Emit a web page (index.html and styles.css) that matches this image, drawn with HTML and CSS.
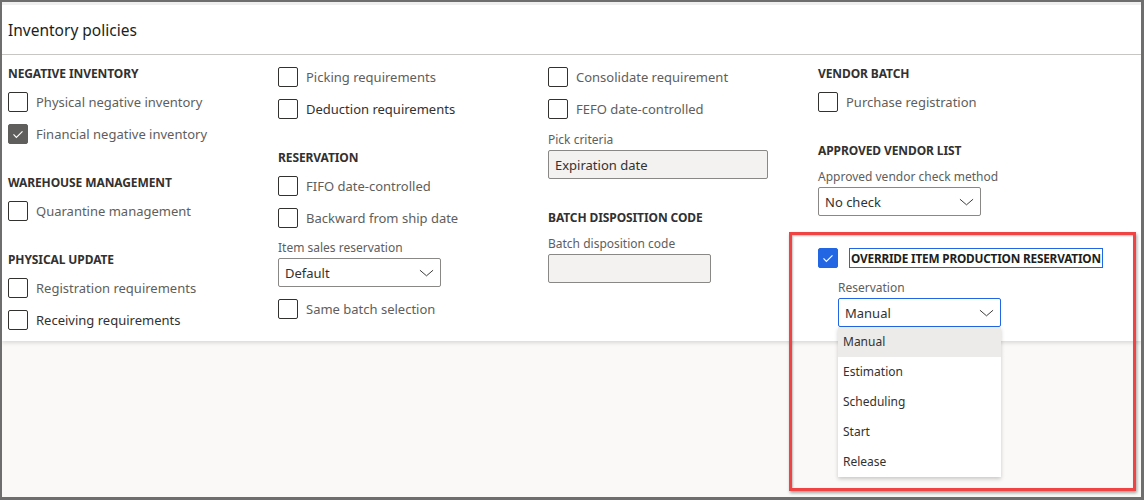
FILE: index.html
```html
<!DOCTYPE html>
<html lang="en">
<head>
    <meta charset="UTF-8">
    <title>Inventory policies</title>
    <link rel="stylesheet" href="styles.css">
</head>
<body>
<div class="frame">
    <div class="panel">
        <div class="panelHead">Inventory policies</div>
        <div class="panelBody">
            <div class="col">
                <div class="group">
                    <div class="groupTitle">Negative inventory</div>
                    <label class="check"><span class="box"></span><span class="text">Physical negative inventory</span></label>
                    <label class="check"><span class="box checked"><svg viewBox="0 0 20 20"><path d="M5 10.5l3.2 3.2L15 7"/></svg></span><span class="text">Financial negative inventory</span></label>
                </div>
                <div class="group">
                    <div class="groupTitle">Warehouse management</div>
                    <label class="check"><span class="box"></span><span class="text">Quarantine management</span></label>
                </div>
                <div class="group">
                    <div class="groupTitle">Physical update</div>
                    <label class="check"><span class="box"></span><span class="text">Registration requirements</span></label>
                    <label class="check"><span class="box"></span><span class="text dark">Receiving requirements</span></label>
                </div>
            </div>

            <div class="col">
                <div class="group">
                    <label class="check"><span class="box"></span><span class="text">Picking requirements</span></label>
                    <label class="check"><span class="box"></span><span class="text dark">Deduction requirements</span></label>
                </div>
                <div class="group">
                    <div class="groupTitle">Reservation</div>
                    <label class="check"><span class="box"></span><span class="text">FIFO date-controlled</span></label>
                    <label class="check"><span class="box"></span><span class="text">Backward from ship date</span></label>
                    <div class="field">
                        <div class="fieldLabel">Item sales reservation</div>
                        <div class="select">Default<svg class="chevron" viewBox="0 0 16 8"><path d="M1 1l7 6 7-6"/></svg></div>
                    </div>
                    <label class="check"><span class="box"></span><span class="text">Same batch selection</span></label>
                </div>
            </div>

            <div class="col">
                <div class="group">
                    <label class="check"><span class="box"></span><span class="text">Consolidate requirement</span></label>
                    <label class="check"><span class="box"></span><span class="text">FEFO date-controlled</span></label>
                    <div class="field first">
                        <div class="fieldLabel">Pick criteria</div>
                        <div class="input wide">Expiration date</div>
                    </div>
                </div>
                <div class="group">
                    <div class="groupTitle">Batch disposition code</div>
                    <div class="field">
                        <div class="fieldLabel">Batch disposition code</div>
                        <div class="input"></div>
                    </div>
                </div>
            </div>

            <div class="col">
                <div class="group">
                    <div class="groupTitle">Vendor batch</div>
                    <label class="check"><span class="box"></span><span class="text">Purchase registration</span></label>
                </div>
                <div class="group">
                    <div class="groupTitle">Approved vendor list</div>
                    <div class="field">
                        <div class="fieldLabel">Approved vendor check method</div>
                        <div class="select">No check<svg class="chevron" viewBox="0 0 16 8"><path d="M1 1l7 6 7-6"/></svg></div>
                    </div>
                </div>
                <div class="group">
                    <label class="check override"><span class="box blue"><svg viewBox="0 0 20 20"><path d="M5 10.5l3.2 3.2L15 7"/></svg></span><span class="overrideText">Override item production reservation</span></label>
                    <div class="field nested">
                        <div class="fieldLabel">Reservation</div>
                        <div class="dropWrap">
                            <div class="select focused">Manual<svg class="chevron" viewBox="0 0 16 8"><path d="M1 1l7 6 7-6"/></svg></div>
                            <ul class="dropList">
                                <li class="selected">Manual</li>
                                <li>Estimation</li>
                                <li>Scheduling</li>
                                <li>Start</li>
                                <li>Release</li>
                            </ul>
                        </div>
                    </div>
                </div>
            </div>
        </div>
    </div>
    <div class="callout"></div>
</div>
</body>
</html>
```

FILE: styles.css
```css
* {
    box-sizing: border-box;
}

body {
    margin: 0;
    font-family: "Segoe UI", "Noto Sans", sans-serif;
    color: #323130;
}

.frame {
    position: relative;
    width: 1144px;
    height: 500px;
    border-style: solid;
    border-color: #6e6e6e;
    border-width: 2px 3px 3px 2px;
    background-color: #faf9f8; /* page background */
    overflow: hidden;
}

.panel {
    background-color: #ffffff;
    border-top: 3px solid #efefef;
    box-shadow: 0 1.6px 4px rgba(0, 0, 0, 0.13);
}

.panelHead {
    height: 50px;
    padding: 0 6px;
    display: flex;
    align-items: center;
    font-size: 15.5px;
    color: #201f1e;
    border-bottom: 1px solid #c8c6c4;
}

.panelBody {
    display: flex;
    padding: 6px 0 5px 6px;
}

.col {
    width: 270px;
    display: flex;
    flex-direction: column;
}

.group + .group {
    margin-top: 20px;
}

.groupTitle {
    line-height: 25px;
    font-size: 12px;
    font-weight: bold;
    text-transform: uppercase;
    letter-spacing: -0.1px;
}

.check {
    height: 32px;
    display: flex;
    align-items: center;
    gap: 8px;
    font-size: 13px;
    white-space: nowrap;
}

.box {
    flex: none;
    width: 20px;
    height: 20px;
    border: 1px solid #323130;
    border-radius: 2px;
    display: flex;
    align-items: center;
    justify-content: center;
}

.box svg {
    width: 20px;
    height: 20px;
    fill: none;
    stroke: #ffffff;
    stroke-width: 1.3;
}

.box.checked {
    background-color: #605e5c;
    border-color: #605e5c;
}

.box.blue {
    background-color: #2266e3;
    border-color: #2266e3;
}

.text {
    color: #605e5c;
}

.text.dark {
    color: #323130;
}

.override {
    gap: 12px;
}

.overrideText {
    font-size: 11.8px;
    font-weight: bold;
    text-transform: uppercase;
    letter-spacing: -0.2px;
    line-height: 18px;
    padding: 0 1px;
    color: #201f1e;
    outline: 1px solid #2266e3;
}

.field {
    margin: 6px 0 6px;
}

.field.first {
    margin-top: 7px;
}

.field.nested {
    margin-left: 20px;
}

.fieldLabel {
    font-size: 12px;
    line-height: 16px;
    color: #605e5c;
    margin-bottom: 2px;
}

.select,
.input {
    height: 29px;
    width: 163px;
    border: 1px solid #8a8886;
    border-radius: 2px;
    padding: 0 6px;
    display: flex;
    align-items: center;
    justify-content: space-between;
    font-size: 13px;
}

.input {
    background-color: #f3f2f1;
}

.input.wide {
    width: 220px;
}

.select.focused {
    border-color: #2266e3;
}

.chevron {
    width: 15px;
    height: 8px;
    fill: none;
    stroke: #323130;
    stroke-width: 1;
}

.dropWrap {
    position: relative;
}

.dropList {
    position: absolute;
    top: 29px;
    left: 0;
    width: 163px;
    margin: 0;
    padding: 0;
    list-style: none;
    background-color: #ffffff;
    box-shadow: 0 1.6px 4px rgba(0, 0, 0, 0.2);
    z-index: 2;
}

.dropList li {
    height: 30px;
    line-height: 30px;
    padding-left: 5px;
    font-size: 12px;
}

.dropList li.selected {
    background-color: #edebe9;
}

/* red annotation box */
.callout {
    position: absolute;
    left: 787px;
    top: 230px;
    width: 347px;
    height: 259px;
    border: 3px solid #f04444;
    box-shadow: 1px 2px 3px rgba(0, 0, 0, 0.35), inset 1px 1px 2px rgba(0, 0, 0, 0.25);
    z-index: 3;
}
```
